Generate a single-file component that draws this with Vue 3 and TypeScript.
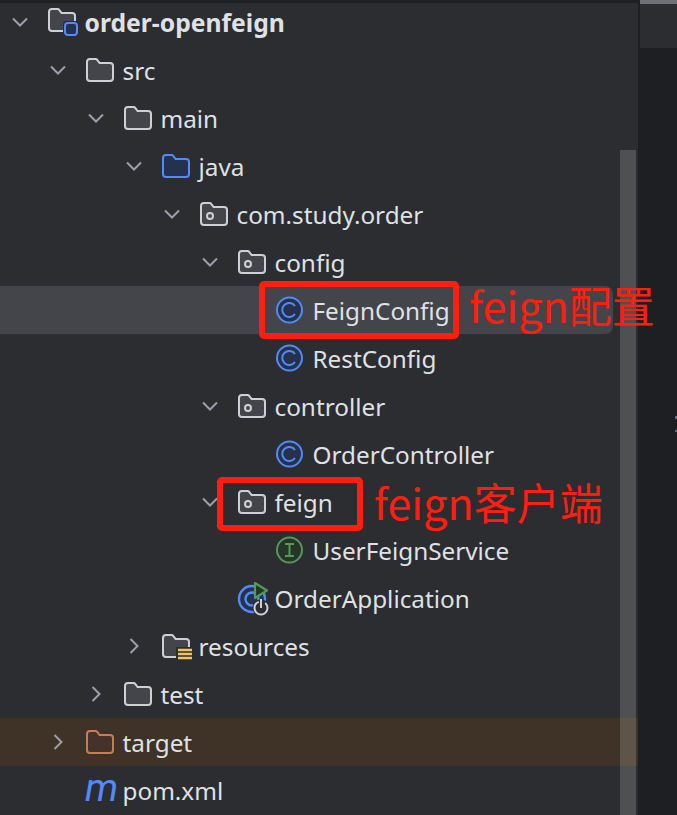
<script setup lang="ts">
type Kind = 'module' | 'folder' | 'source' | 'package' | 'class' | 'iface' | 'app' | 'resources' | 'target' | 'maven'
interface Row { label: string; depth: number; kind: Kind; arrow?: 'open' | 'closed'; tone?: 'selected' | 'excluded'; bold?: boolean }

const rows: Row[] = [
  { label: 'order-openfeign', depth: 0, kind: 'module', arrow: 'open', bold: true },
  { label: 'src', depth: 1, kind: 'folder', arrow: 'open' },
  { label: 'main', depth: 2, kind: 'folder', arrow: 'open' },
  { label: 'java', depth: 3, kind: 'source', arrow: 'open' },
  { label: 'com.study.order', depth: 4, kind: 'package', arrow: 'open' },
  { label: 'config', depth: 5, kind: 'package', arrow: 'open' },
  { label: 'FeignConfig', depth: 6, kind: 'class', tone: 'selected' },
  { label: 'RestConfig', depth: 6, kind: 'class' },
  { label: 'controller', depth: 5, kind: 'package', arrow: 'open' },
  { label: 'OrderController', depth: 6, kind: 'class' },
  { label: 'feign', depth: 5, kind: 'package', arrow: 'open' },
  { label: 'UserFeignService', depth: 6, kind: 'iface' },
  { label: 'OrderApplication', depth: 5, kind: 'app' },
  { label: 'resources', depth: 3, kind: 'resources', arrow: 'closed' },
  { label: 'test', depth: 2, kind: 'folder', arrow: 'closed' },
  { label: 'target', depth: 1, kind: 'target', arrow: 'closed', tone: 'excluded' },
  { label: 'pom.xml', depth: 1, kind: 'maven' },
]
const folder = 'M1 4a3 3 0 0 1 3-3h5.6a2 2 0 0 1 1.6.8L13.6 5H24a3 3 0 0 1 3 3v12a3 3 0 0 1-3 3H4a3 3 0 0 1-3-3z'
</script>

<template>
  <div class="screen">
    <section class="tree">
      <div
        v-for="row in rows"
        :key="row.label"
        class="row"
        :class="row.tone"
        :style="{ paddingLeft: 10 + row.depth * 38 + 'px' }"
      >
        <span class="arrow">
          <svg v-if="row.arrow === 'open'" width="20" height="20" viewBox="0 0 20 20"><path d="M3 6.5l7 7 7-7" /></svg>
          <svg v-else-if="row.arrow === 'closed'" width="20" height="20" viewBox="0 0 20 20"><path d="M6.500 3l7 7-7 7" /></svg>
        </span>
        <span class="icon">
          <svg width="30" height="30" viewBox="0 0 30 30">
            <g v-if="row.kind === 'folder'" transform="translate(0 3)"><path class="fd" :d="folder" /></g>
            <g v-else-if="row.kind === 'source'" transform="translate(0 3)"><path class="fd blue" :d="folder" /></g>
            <g v-else-if="row.kind === 'target'" transform="translate(0 3)"><path class="fd rust" :d="folder" /></g>
            <g v-else-if="row.kind === 'package'" transform="translate(0 3)">
              <path class="fd" :d="folder" /><circle class="dot" cx="10" cy="14" r="3" />
            </g>
            <g v-else-if="row.kind === 'module'" transform="translate(0 1)">
              <path class="fd" :d="folder" />
              <rect x="15" y="13" width="15" height="15" rx="3" fill="#2b2d30" />
              <rect x="17" y="15" width="12" height="12" rx="3" fill="#25324d" stroke="#548af7" stroke-width="2" />
            </g>
            <g v-else-if="row.kind === 'resources'" transform="translate(0 3)">
              <path class="fd" :d="folder" />
              <rect x="14" y="13" width="17" height="14" fill="#2b2d30" />
              <path d="M16 16h14M16 20h14M16 24h14" stroke="#f2c55c" stroke-width="2.400" fill="none" />
            </g>
            <g v-else-if="row.kind === 'class'">
              <circle cx="13.500" cy="15" r="12.500" fill="#25324d" stroke="#548af7" stroke-width="2" />
              <path d="M19 11a7 7 0 1 0 0 8" fill="none" stroke="#548af7" stroke-width="2" />
            </g>
            <g v-else-if="row.kind === 'iface'">
              <circle cx="13.500" cy="15" r="12.500" fill="#253627" stroke="#57965c" stroke-width="2" />
              <path d="M9 9h9M9 21h9M13.500 9v12" fill="none" stroke="#57965c" stroke-width="2" />
            </g>
            <g v-else-if="row.kind === 'app'">
              <circle cx="14" cy="16" r="13" fill="#25324d" stroke="#548af7" stroke-width="2.400" />
              <circle cx="14" cy="16" r="6.500" fill="none" stroke="#548af7" stroke-width="2.400" />
              <path d="M17 0L29 7.500 17 15z" fill="#253627" stroke="#57965c" stroke-width="2.200" stroke-linejoin="round" />
              <circle cx="23" cy="25" r="8.500" fill="#2b2d30" />
              <circle cx="23" cy="25" r="6.500" fill="none" stroke="#ced0d6" stroke-width="2" stroke-dasharray="33 8" stroke-dashoffset="-4.500" transform="rotate(-90 23 25)" />
              <path d="M23 16v9" stroke="#ced0d6" stroke-width="2" />
            </g>
          </svg>
          <span v-if="row.kind === 'maven'" class="maven">m</span>
        </span>
        <span class="label" :class="{ bold: row.bold }">{{ row.label }}</span>
      </div>
    </section>
    <aside class="editor"><div class="tab"></div></aside>

    <div class="topline"></div>
    <div class="thumb"></div>
    <div class="gutter"></div>
    <div class="mark mark-config"></div>
    <div class="mark mark-feign"></div>
    <span class="note note-config">feign配置</span>
    <span class="note note-feign">feign客户端</span>
  </div>
</template>

<style>
html, body { margin: 0; background: #1e1f22; }
</style>

<style scoped>
.screen {
  position: relative;
  width: 677px;
  height: 815px;
  overflow: hidden;
  display: flex;
  background: #1e1f22;
  font-family: "Noto Sans", "Noto Sans CJK SC", sans-serif;
}
.tree {
  width: 638px;
  flex: none;
  background: #2b2d30;
  margin-top: -2px;
  height: 817px;
  box-sizing: border-box;
}
.row {
  display: flex;
  align-items: center;
  height: 48px;
  box-sizing: border-box;
  color: #dfe1e5;
  font-size: 24.3px;
}
.row.selected {
  background: #43454a;
  margin-right: 25px;
  border-radius: 0 8px 8px 0;
}
.row.excluded { background: #3f3226; }
.arrow {
  width: 38px;
  height: 20px;
  flex: none;
}
.arrow svg { display: block; }
.arrow path {
  fill: none;
  stroke: #9da0a8;
  stroke-width: 2;
}
.icon {
  position: relative;
  width: 36.500px;
  height: 30px;
  flex: none;
}
.icon svg { display: block; overflow: visible; }
.fd { fill: #43454a; stroke: #ced0d6; stroke-width: 2; }
.fd.blue { fill: #25324d; stroke: #548af7; }
.fd.rust { fill: #45322b; stroke: #c77d55; }
.dot { fill: none; stroke: #ced0d6; stroke-width: 2; }
.maven {
  position: absolute;
  left: -1px;
  top: -11px;
  font: italic 400 39px/48px Roboto, sans-serif;
  color: #548af7;
}
.label { white-space: nowrap; line-height: 48px; padding-top: 2px; }
.label.bold { font-weight: 700; font-size: 24.700px; }
.editor { flex: 1; }
.tab {
  margin-left: 2px;
  height: 44px;
  border-top: 4px solid #6f7176;
  background: #2b2d30;
}
.topline {
  position: absolute;
  left: 0;
  top: 0;
  width: 638px;
  height: 3px;
  background: #1e1f22;
}
.thumb {
  position: absolute;
  left: 620px;
  top: 150px;
  bottom: 0;
  width: 16px;
  background: rgba(255, 255, 255, 0.17);
}
.gutter {
  position: absolute;
  left: 675px;
  top: 416px;
  width: 2px;
  height: 11px;
  border-top: 3px solid #5d7380;
  border-bottom: 2px solid #5d7380;
}
.mark {
  position: absolute;
  box-sizing: border-box;
  border: 6px solid #ff1f10;
  border-radius: 5px;
}
.mark-config { left: 259px; top: 281px; width: 200px; height: 58px; }
.mark-feign { left: 217px; top: 477px; width: 146px; height: 54px; }
.note {
  position: absolute;
  color: #ff1f10;
  font: 43px/50px "Noto Sans CJK SC", sans-serif;
  white-space: nowrap;
}
.note-config { left: 469px; top: 279px; }
.note-feign { left: 374px; top: 476px; }
</style>
